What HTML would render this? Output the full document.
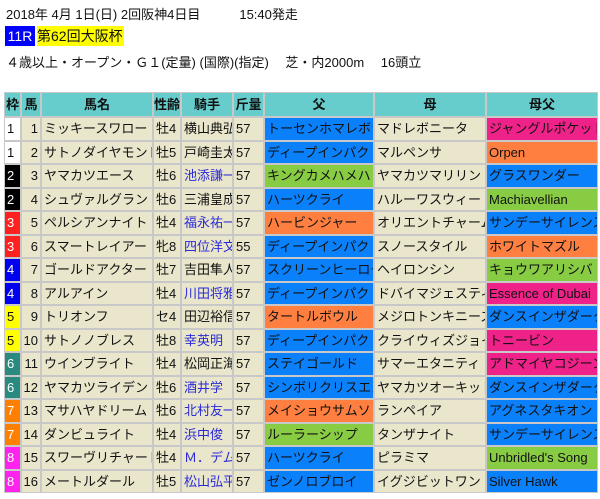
<!DOCTYPE html>
<html><head><meta charset="utf-8"><style>
body{margin:0;width:600px;height:499px;background:#fff;font-family:"Liberation Sans","Noto Sans CJK JP",sans-serif;font-size:13px;color:#111;position:relative;overflow:hidden}
.t{position:absolute;white-space:nowrap}
.g{position:absolute;left:4px;top:92px;padding:1px;background:#c8c8c8;display:grid;grid-template-columns:15px 18px 110px 26px 50px 29px 108px 110px 110px;grid-template-rows:23px repeat(16,21.5px);gap:2px}
.g div{background:#e9e6cb;line-height:21.5px;white-space:nowrap;overflow:hidden;padding-left:2px}
.g .h{background:#66cccc;font-weight:bold;text-align:center;line-height:23px;padding:0}
.g .n{text-align:right;padding:0 2px 0 0}
.j{color:#2a2ad8}
.g .B{background:#0a80fa}.g .G{background:#88cc44}.g .O{background:#ff7f40}.g .P{background:#ee2288}
.f1{background:#fff!important}.f2{background:#000!important;color:#fff}.f3{background:#ff2020!important;color:#fff}.f4{background:#0000f0!important;color:#fff}.f5{background:#ffff00!important}.f6{background:#2a8a80!important;color:#fff}.f7{background:#ff8000!important;color:#fff}.f8{background:#ff22ee!important;color:#fff}
</style></head><body>
<div class="t" style="left:6px;top:4px">2018年 4月 1日(日) 2回阪神4日目　　　15:40発走</div>
<div class="t" style="left:5px;top:26px;width:30px;height:20px;background:#0000ff;color:#fff;line-height:20px;font-size:14px;text-align:center">11R</div>
<div class="t" style="left:37px;top:26px;width:87px;height:20px;background:#ffff00;line-height:20px;font-size:14px">第62回大阪杯</div>
<div class="t" style="left:6px;top:52px">４歳以上・オープン・Ｇ１(定量) (国際)(指定)　 芝・内2000m　 16頭立</div>
<div class="g">
<div class="h">枠</div><div class="h">馬</div><div class="h">馬名</div><div class="h">性齢</div><div class="h">騎手</div><div class="h">斤量</div><div class="h">父</div><div class="h">母</div><div class="h">母父</div>
<div class="f1">1</div><div class="n">1</div><div>ミッキースワロー</div><div>牡4</div><div>横山典弘</div><div>57</div><div class="B">トーセンホマレボシ</div><div>マドレボニータ</div><div class="P">ジャングルポケット</div>
<div class="f1">1</div><div class="n">2</div><div>サトノダイヤモンド</div><div>牡5</div><div>戸崎圭太</div><div>57</div><div class="B">ディープインパクト</div><div>マルペンサ</div><div class="O">Orpen</div>
<div class="f2">2</div><div class="n">3</div><div>ヤマカツエース</div><div>牡6</div><div class="j">池添謙一</div><div>57</div><div class="G">キングカメハメハ</div><div>ヤマカツマリリン</div><div class="B">グラスワンダー</div>
<div class="f2">2</div><div class="n">4</div><div>シュヴァルグラン</div><div>牡6</div><div>三浦皇成</div><div>57</div><div class="B">ハーツクライ</div><div>ハルーワスウィート</div><div class="G">Machiavellian</div>
<div class="f3">3</div><div class="n">5</div><div>ペルシアンナイト</div><div>牡4</div><div class="j">福永祐一</div><div>57</div><div class="O">ハービンジャー</div><div>オリエントチャーム</div><div class="B">サンデーサイレンス</div>
<div class="f3">3</div><div class="n">6</div><div>スマートレイアー</div><div>牝8</div><div class="j">四位洋文</div><div>55</div><div class="B">ディープインパクト</div><div>スノースタイル</div><div class="O">ホワイトマズル</div>
<div class="f4">4</div><div class="n">7</div><div>ゴールドアクター</div><div>牡7</div><div>吉田隼人</div><div>57</div><div class="B">スクリーンヒーロー</div><div>ヘイロンシン</div><div class="G">キョウワアリシバ</div>
<div class="f4">4</div><div class="n">8</div><div>アルアイン</div><div>牡4</div><div class="j">川田将雅</div><div>57</div><div class="B">ディープインパクト</div><div>ドバイマジェスティ</div><div class="P">Essence of Dubai</div>
<div class="f5">5</div><div class="n">9</div><div>トリオンフ</div><div>セ4</div><div>田辺裕信</div><div>57</div><div class="O">タートルボウル</div><div>メジロトンキニーズ</div><div class="B">ダンスインザダーク</div>
<div class="f5">5</div><div class="n">10</div><div>サトノノブレス</div><div>牡8</div><div class="j">幸英明</div><div>57</div><div class="B">ディープインパクト</div><div>クライウィズジョイ</div><div class="P">トニービン</div>
<div class="f6">6</div><div class="n">11</div><div>ウインブライト</div><div>牡4</div><div>松岡正海</div><div>57</div><div class="B">ステイゴールド</div><div>サマーエタニティ</div><div class="P">アドマイヤコジーン</div>
<div class="f6">6</div><div class="n">12</div><div>ヤマカツライデン</div><div>牡6</div><div class="j">酒井学</div><div>57</div><div class="B">シンボリクリスエス</div><div>ヤマカツオーキッド</div><div class="B">ダンスインザダーク</div>
<div class="f7">7</div><div class="n">13</div><div>マサハヤドリーム</div><div>牡6</div><div class="j">北村友一</div><div>57</div><div class="O">メイショウサムソン</div><div>ランペイア</div><div class="B">アグネスタキオン</div>
<div class="f7">7</div><div class="n">14</div><div>ダンビュライト</div><div>牡4</div><div class="j">浜中俊</div><div>57</div><div class="G">ルーラーシップ</div><div>タンザナイト</div><div class="B">サンデーサイレンス</div>
<div class="f8">8</div><div class="n">15</div><div>スワーヴリチャード</div><div>牡4</div><div class="j">Ｍ．デム</div><div>57</div><div class="B">ハーツクライ</div><div>ピラミマ</div><div class="G">Unbridled's Song</div>
<div class="f8">8</div><div class="n">16</div><div>メートルダール</div><div>牡5</div><div class="j">松山弘平</div><div>57</div><div class="B">ゼンノロブロイ</div><div>イグジビットワン</div><div class="B">Silver Hawk</div>
</div>
</body></html>
